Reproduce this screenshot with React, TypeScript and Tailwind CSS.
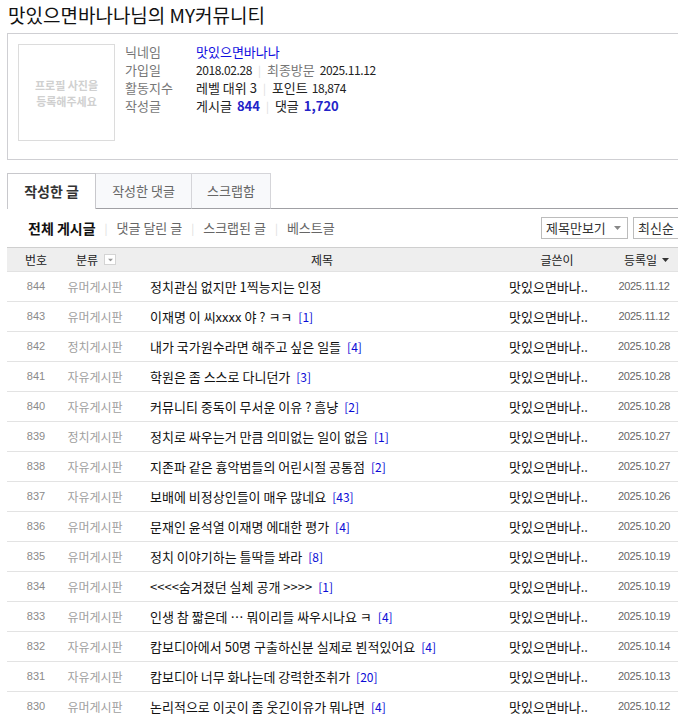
import React from "react";

type Post = {
  no: number;
  cat: string;
  title: string;
  cmt?: number;
  date: string;
};

const posts: Post[] = [
  { no: 844, cat: "유머게시판", title: "정치관심 없지만 1찍능지는 인정", date: "2025.11.12" },
  { no: 843, cat: "유머게시판", title: "이재명 이 씨xxxx 야 ? ㅋㅋ", cmt: 1, date: "2025.11.12" },
  { no: 842, cat: "정치게시판", title: "내가 국가원수라면 해주고 싶은 일들", cmt: 4, date: "2025.10.28" },
  { no: 841, cat: "자유게시판", title: "학원은 좀 스스로 다니던가", cmt: 3, date: "2025.10.28" },
  { no: 840, cat: "자유게시판", title: "커뮤니티 중독이 무서운 이유 ? 흠냥", cmt: 2, date: "2025.10.28" },
  { no: 839, cat: "정치게시판", title: "정치로 싸우는거 만큼 의미없는 일이 없음", cmt: 1, date: "2025.10.27" },
  { no: 838, cat: "자유게시판", title: "지존파 같은 흉악범들의 어린시절 공통점", cmt: 2, date: "2025.10.27" },
  { no: 837, cat: "자유게시판", title: "보배에 비정상인들이 매우 많네요", cmt: 43, date: "2025.10.26" },
  { no: 836, cat: "유머게시판", title: "문재인 윤석열 이재명 에대한 평가", cmt: 4, date: "2025.10.20" },
  { no: 835, cat: "유머게시판", title: "정치 이야기하는 틀딱들 봐라", cmt: 8, date: "2025.10.19" },
  { no: 834, cat: "유머게시판", title: "<<<<숨겨졌던 실체 공개 >>>>", cmt: 1, date: "2025.10.19" },
  { no: 833, cat: "유머게시판", title: "인생 참 짧은데 … 뭐이리들 싸우시나요 ㅋ", cmt: 4, date: "2025.10.19" },
  { no: 832, cat: "자유게시판", title: "캄보디아에서 50명 구출하신분 실제로 뵌적있어요", cmt: 4, date: "2025.10.14" },
  { no: 831, cat: "자유게시판", title: "캄보디아 너무 화나는데 강력한조취가", cmt: 20, date: "2025.10.13" },
  { no: 830, cat: "유머게시판", title: "논리적으로 이곳이 좀 웃긴이유가 뭐냐면", cmt: 4, date: "2025.10.12" },
];

function Arrow({ className = "" }: { className?: string }) {
  return (
    <svg width="7" height="4" viewBox="0 0 7 4" className={className}>
      <path d="M0 0h7L3.5 4z" fill="currentColor" />
    </svg>
  );
}

function Bar({ wide = false }: { wide?: boolean }) {
  return <span className={`${wide ? "mx-[9px]" : "mx-[6px]"} text-[#dcdcdc] text-[11px]`}>|</span>;
}

// 프로필 숫자는 조금 좁게
function Num({ children, className = "" }: { children: React.ReactNode; className?: string }) {
  return <span className={`text-[12px] tracking-[-0.4px] ${className}`}>{children}</span>;
}

export default function App() {
  return (
    <div
      className="w-[678px] h-[718px] overflow-hidden bg-white text-[#222]"
      style={{ fontFamily: '"Noto Sans CJK KR", "Noto Sans", sans-serif' }}
    >
      {/* 제목 */}
      <h1 className="h-[33px] pl-[8px] text-[19px] leading-[29px] font-normal text-[#111] whitespace-nowrap">
        맛있으면바나나님의 MY커뮤니티
      </h1>

      {/* 프로필 */}
      <div className="ml-[7px] w-[700px] h-[127px] border border-[#cfcfd3] flex gap-[10px] pl-[10px] pt-[10px]">
        <div className="w-[97px] h-[97px] border border-[#dcdcdc] flex items-center justify-center text-center text-[11px] leading-[16px] font-bold text-[#d0d0d0] shrink-0">
          프로필 사진을
          <br />
          등록해주세요
        </div>
        <div className="text-[13px] leading-[18px] -mt-px">
          <div className="flex items-baseline">
            <span className="w-[71px] text-[#777]">닉네임</span>
            <span className="text-[#1010e0]">맛있으면바나나</span>
          </div>
          <div className="flex items-baseline">
            <span className="w-[71px] text-[#777]">가입일</span>
            <Num className="text-[#222]">2018.02.28</Num>
            <Bar />
            <span className="text-[#777]">최종방문</span>
            <Num className="ml-[5px] text-[#222]">2025.11.12</Num>
          </div>
          <div className="flex items-baseline">
            <span className="w-[71px] text-[#777]">활동지수</span>
            <span className="text-[#222]">레벨 대위 3</span>
            <Bar />
            <span className="text-[#222]">포인트</span>
            <Num className="ml-[4px] text-[#222]">18,874</Num>
          </div>
          <div className="flex items-baseline">
            <span className="w-[71px] text-[#777]">작성글</span>
            <span className="text-[#222]">게시글</span>
            <b className="ml-[5px] text-[#2323c8]">844</b>
            <Bar />
            <span className="text-[#222]">댓글</span>
            <b className="ml-[5px] text-[#2323c8]">1,720</b>
          </div>
        </div>
      </div>

      {/* 탭 */}
      <div className="mt-[13px] pl-[7px] flex items-end h-[36px]">
        <div className="w-[89px] h-[36px] border border-b-0 border-[#c8c8cc] bg-white flex items-center justify-center text-[14px] font-bold text-[#333]">
          작성한 글
        </div>
        <div className="w-[96px] h-[36px] border-t border-r border-b border-[#d5d5d9] border-b-[#a0a0a4] bg-[#f8f9fb] flex items-center justify-center text-[13px] text-[#666]">
          작성한 댓글
        </div>
        <div className="w-[79px] h-[36px] border-t border-r border-b border-[#d5d5d9] border-b-[#a0a0a4] bg-[#f8f9fb] flex items-center justify-center text-[13px] text-[#666]">
          스크랩함
        </div>
        <div className="flex-1 h-[36px] border-b border-[#a0a0a4]" />
      </div>

      {/* 필터 */}
      <div className="h-[38px] flex items-center pl-[28px] pr-0">
        <span className="text-[14px] font-bold text-[#111]">전체 게시글</span>
        <Bar wide />
        <span className="text-[13px] text-[#666]">댓글 달린 글</span>
        <Bar wide />
        <span className="text-[13px] text-[#666]">스크랩된 글</span>
        <Bar wide />
        <span className="text-[13px] text-[#666]">베스트글</span>
        <div className="ml-auto flex gap-[5px] -mr-[10px]">
          <div className="w-[87px] h-[22px] border border-[#bcbcbc] flex items-center pl-[4px] text-[13px] text-[#333]">
            제목만보기
            <Arrow className="ml-[8px] text-[#888]" />
          </div>
          <div className="w-[55px] h-[22px] border border-[#bcbcbc] flex items-center pl-[4px] text-[13px] text-[#333]">
            최신순
          </div>
        </div>
      </div>

      {/* 목록 */}
      <div className="ml-[7px] w-[671px]">
        <div className="h-[25px] flex items-center bg-[#eeeeee] border-t border-[#cfcfcf] border-b border-b-[#e2e2e2] text-[12px] text-[#222]">
          <div className="w-[58px] text-center">번호</div>
          <div className="w-[60px] flex items-center justify-center pl-[2px]">
            분류
            <span className="ml-[6px] w-[12px] h-[11px] bg-white border border-[#d4d4d4] flex items-center justify-center">
              <Arrow className="text-[#999] scale-75" />
            </span>
          </div>
          <div className="w-[374px] text-center pl-[20px]">제목</div>
          <div className="w-[116px] text-center">글쓴이</div>
          <div className="w-[63px] flex items-center justify-center">
            등록일
            <Arrow className="ml-[5px] text-[#333]" />
          </div>
        </div>

        {posts.map((p) => (
          <div key={p.no} className="h-[30px] flex items-center border-b border-[#e3e3e3]">
            <div className="w-[58px] text-center text-[11px] text-[#8a8a8a]" style={{ fontFamily: '"Liberation Sans", sans-serif' }}>
              {p.no}
            </div>
            <div className="w-[60px] text-center text-[12px] text-[#a0a0a0] whitespace-nowrap">{p.cat}</div>
            <div className="w-[374px] pl-[25px] text-[13px] text-[#111] whitespace-nowrap overflow-hidden">
              {p.title}
              {p.cmt !== undefined && (
                <span className="ml-[6px] text-[12px] text-[#0b0bd6]">[{p.cmt}]</span>
              )}
            </div>
            <div className="w-[116px] pl-[10px] text-[13px] text-[#111] whitespace-nowrap">맛있으면바나..</div>
            <div
              className="w-[58px] text-center text-[11px] text-[#666] tracking-[-0.3px]"
              style={{ fontFamily: '"Liberation Sans", sans-serif' }}
            >
              {p.date}
            </div>
          </div>
        ))}
      </div>
    </div>
  );
}
